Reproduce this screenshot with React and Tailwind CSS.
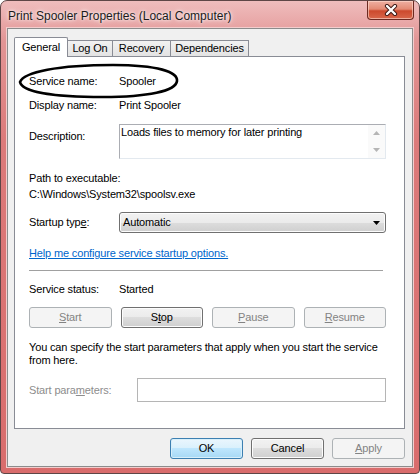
import React from "react";

const font = "font-['Liberation_Sans',Arial,sans-serif]";

function Ul({ children }) {
  return <span className="underline underline-offset-[1px]">{children}</span>;
}

function WinButton({ children, disabled, primary, className = "" }) {
  let look =
    "border-[#707070] text-black bg-[linear-gradient(180deg,#f2f2f2_0%,#ebebeb_50%,#dddddd_50%,#cfcfcf_100%)] shadow-[inset_0_0_0_1px_#fcfcfc]";
  if (disabled) {
    look = "border-[#adb2b5] text-[#838383] bg-[#f4f4f4]";
  } else if (primary) {
    look =
      "border-[#3c7fb1] text-black bg-[linear-gradient(180deg,#eaf6fd_0%,#d9f0fc_50%,#bee6fd_50%,#a7d9f5_100%)] shadow-[inset_0_0_0_1px_#d8effa]";
  }
  return (
    <div
      className={`h-[21px] flex items-center justify-center rounded-[3px] border text-[11px] leading-[13px] ${look} ${className}`}
    >
      {children}
    </div>
  );
}

export default function App() {
  return (
    <div className={`w-[420px] h-[474px] bg-white ${font}`}>
      <div className="h-full flex flex-col rounded-t-[7px] rounded-b-[4px] border border-[#5e4646] px-[6px] pb-[6px] bg-[linear-gradient(180deg,#efbdbd_0px,#e9a9a9_20px,#e29595_40px,#dc7a7a_140px,#d96c6c_100%)]">
        {/* Title bar */}
        <div className="h-[27px] flex justify-between items-start">
          <div className="pt-[8px] pl-[1px] text-[12px] leading-[14px] text-[#1b1b1b] [text-shadow:0_0_6px_#ffffff,0_0_3px_#ffffff]">
            Print Spooler Properties (Local Computer)
          </div>
          <div className="w-[47px] h-[19px] -mr-[1px] rounded-b-[4px] border border-t-0 border-[#6b2a22] flex items-center justify-center bg-[linear-gradient(180deg,#eeb0a2_0%,#e38a74_45%,#cc4a2e_55%,#d8674b_100%)] shadow-[inset_0_0_0_1px_rgba(255,220,210,0.6)]">
            <svg width="14" height="12" viewBox="0 0 14 12">
              <path d="M3 2 L11 10 M11 2 L3 10" stroke="#3b1612" strokeWidth="4.2" strokeLinecap="round" />
              <path d="M3 2 L11 10 M11 2 L3 10" stroke="#ffffff" strokeWidth="2.4" strokeLinecap="round" />
            </svg>
          </div>
        </div>

        {/* Client area */}
        <div className="flex-1 flex flex-col border border-[#8c8c8c] bg-[#f0f0f0] pl-[6px] pr-[7px] pt-[8px] shadow-[0_0_0_1px_#f3cdcd] text-[11px] leading-[13px] tracking-[-0.15px] text-black">
          {/* Tabs */}
          <div className="h-[19px] flex items-end">
            <div className="relative z-10 -mb-px h-[20px] w-[54px] bg-white border border-b-0 border-[#898c95] rounded-t-[2px] flex items-center justify-center pb-[1px]">
              General
            </div>
            <div className="-ml-px h-[16px] w-[46px] border border-b-0 border-[#898c95] bg-[linear-gradient(180deg,#f2f2f2,#e3e3e3)] flex items-center justify-center">
              Log On
            </div>
            <div className="-ml-px h-[16px] w-[59px] border border-b-0 border-[#898c95] bg-[linear-gradient(180deg,#f2f2f2,#e3e3e3)] flex items-center justify-center">
              Recovery
            </div>
            <div className="-ml-px h-[16px] w-[79px] border border-b-0 border-[#898c95] bg-[linear-gradient(180deg,#f2f2f2,#e3e3e3)] flex items-center justify-center">
              Dependencies
            </div>
          </div>

          {/* Tab panel */}
          <div className="relative h-[373px] border border-[#898c95] bg-white pl-[14px] pr-[18px] flex flex-col">
            {/* Hand-drawn ellipse annotation */}
            <svg className="absolute left-[3px] top-[5px]" width="162" height="38" viewBox="0 0 162 38">
              <path
                d="M2 20 C 6 10, 40 3, 95 3 C 140 3, 160 10, 159 19 C 158 29, 130 35, 85 35 C 35 35, 4 30, 2 20 Z"
                fill="none"
                stroke="#000"
                strokeWidth="2.6"
              />
            </svg>

            <div className="mt-[18px] h-[13px] flex">
              <div className="w-[90px]">Service name:</div>
              <div>Spooler</div>
            </div>
            <div className="mt-[11px] h-[13px] flex">
              <div className="w-[90px]">Display name:</div>
              <div>Print Spooler</div>
            </div>
            <div className="mt-[12px] h-[35px] flex">
              <div className="w-[90px] pt-[6px]">Description:</div>
              <div className="flex-1 flex border border-[#abadb3] border-b-[#e3e9ef] border-r-[#e3e9ef]">
                <div className="flex-1 pl-[1px] pt-[1px]">Loads files to memory for later printing</div>
                <div className="w-[17px] bg-[#fafafa] flex flex-col items-center justify-between py-[6px]">
                  <svg width="7" height="4" viewBox="0 0 7 4">
                    <path d="M0 4 L3.5 0 L7 4 Z" fill="#b5b5b5" />
                  </svg>
                  <svg width="7" height="4" viewBox="0 0 7 4">
                    <path d="M0 0 L7 0 L3.5 4 Z" fill="#b5b5b5" />
                  </svg>
                </div>
              </div>
            </div>
            <div className="mt-[13px] h-[13px]">Path to executable:</div>
            <div className="mt-[3px] h-[13px]">C:\Windows\System32\spoolsv.exe</div>
            <div className="mt-[11px] h-[21px] flex items-center">
              <div className="w-[90px]">
                Startup typ<Ul>e</Ul>:
              </div>
              <div className="flex-1 h-[21px] flex items-center justify-between rounded-[3px] border border-[#707070] pl-[3px] pr-[5px] bg-[linear-gradient(180deg,#f2f2f2_0%,#ebebeb_50%,#dddddd_50%,#cfcfcf_100%)] shadow-[inset_0_0_0_1px_#fcfcfc]">
                <span>Automatic</span>
                <svg width="7" height="4" viewBox="0 0 7 4">
                  <path d="M0 0 L7 0 L3.5 4 Z" fill="#000" />
                </svg>
              </div>
            </div>
            <div className="mt-[14px] h-[13px]">
              <span className="text-[#0066cc] underline underline-offset-[1px]">
                Help me configure service startup options.
              </span>
            </div>
            <div className="mt-[10px] h-px mr-[3px] bg-[#a0a0a0]" />
            <div className="mt-[12px] h-[13px] flex">
              <div className="w-[90px]">Service status:</div>
              <div>Started</div>
            </div>
            <div className="mt-[11px] grid grid-cols-4 gap-[9px]">
              <WinButton disabled>
                <Ul>S</Ul>tart
              </WinButton>
              <WinButton>
                S<Ul>t</Ul>op
              </WinButton>
              <WinButton disabled>
                <Ul>P</Ul>ause
              </WinButton>
              <WinButton disabled>
                <Ul>R</Ul>esume
              </WinButton>
            </div>
            <div className="mt-[13px] h-[26px] whitespace-nowrap">
              You can specify the start parameters that apply when you start the service
              <br />
              from here.
            </div>
            <div className="mt-[11px] h-[24px] flex items-center">
              <div className="w-[108px] text-[#8d8d8d]">
                Start para<Ul>m</Ul>eters:
              </div>
              <div className="flex-1 h-[24px] border border-[#b5b5b5] bg-white" />
            </div>
          </div>

          {/* Dialog buttons */}
          <div className="mt-[9px] flex justify-end gap-[8px]">
            <WinButton primary className="w-[73px]">
              OK
            </WinButton>
            <WinButton className="w-[73px]">Cancel</WinButton>
            <WinButton disabled className="w-[73px]">
              <Ul>A</Ul>pply
            </WinButton>
          </div>
        </div>
      </div>
    </div>
  );
}
